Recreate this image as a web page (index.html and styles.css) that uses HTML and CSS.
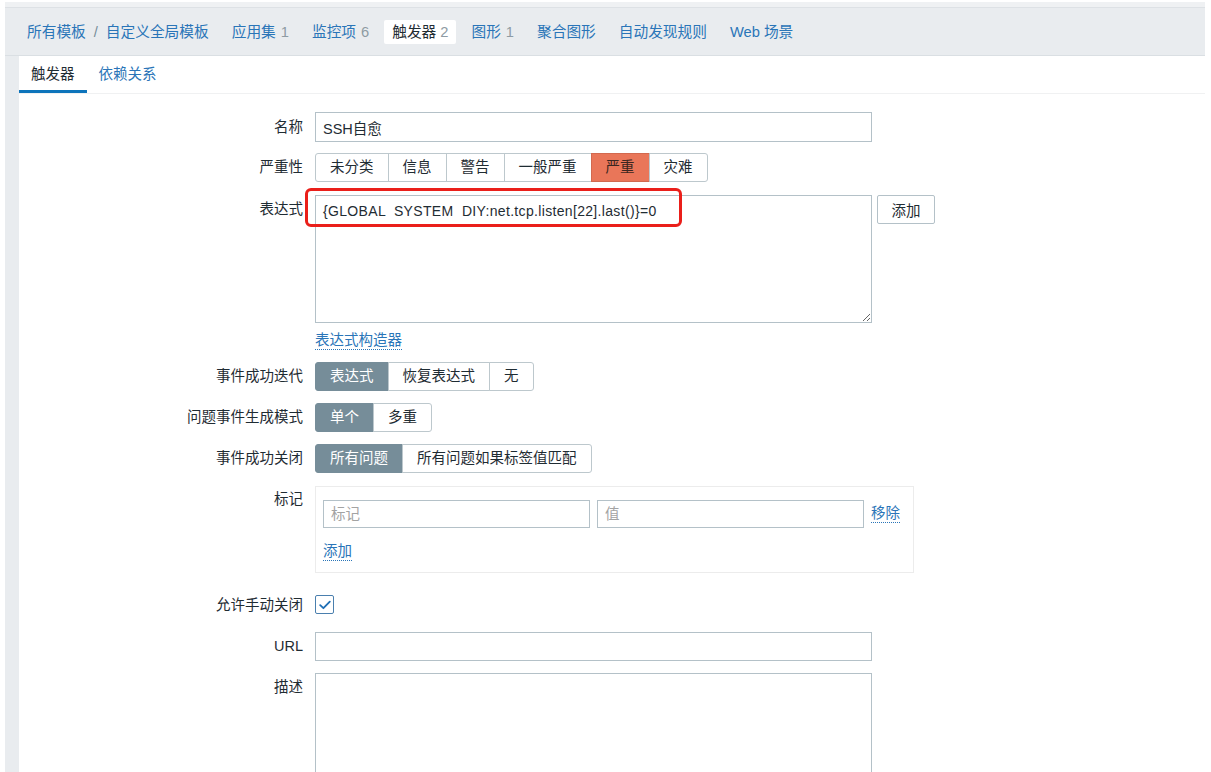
FILE: index.html
```html
<!DOCTYPE html>
<html lang="zh-CN">
<head>
<meta charset="utf-8">
<title>触发器</title>
<link rel="stylesheet" href="styles.css">
</head>
<body>
<div class="wrap">
  <header class="topnav">
    <nav class="crumbs">
      <span class="nav-item"><a class="lnk">所有模板</a><span class="sep">/</span><a class="lnk">自定义全局模板</a></span>
      <span class="nav-item"><a class="lnk">应用集</a><span class="num">1</span></span>
      <span class="nav-item"><a class="lnk">监控项</a><span class="num">6</span></span>
      <span class="nav-item current">触发器<span class="num">2</span></span>
      <span class="nav-item"><a class="lnk">图形</a><span class="num">1</span></span>
      <span class="nav-item"><a class="lnk">聚合图形</a></span>
      <span class="nav-item"><a class="lnk">自动发现规则</a></span>
      <span class="nav-item"><a class="lnk">Web 场景</a></span>
    </nav>
  </header>
  <main class="content">
    <div class="tabs">
      <span class="tab active">触发器</span>
      <a class="tab lnk">依赖关系</a>
    </div>
    <form class="form">
      <div class="row">
        <div class="lbl lbl-tall">名称</div>
        <div class="ctl"><input class="text wide tall" type="text" value="SSH自愈"></div>
      </div>
      <div class="row r-sev">
        <div class="lbl">严重性</div>
        <div class="ctl">
          <div class="seg">
            <span class="seg-btn">未分类</span><span class="seg-btn">信息</span><span class="seg-btn">警告</span><span class="seg-btn">一般严重</span><span class="seg-btn sev-high">严重</span><span class="seg-btn">灾难</span>
          </div>
        </div>
      </div>
      <div class="row r-plus1">
        <div class="lbl">表达式</div>
        <div class="ctl expr-ctl">
          <textarea class="area expr">{GLOBAL  SYSTEM  DIY:net.tcp.listen[22].last()}=0</textarea>
          <button type="button" class="btn">添加</button>
          <span class="mark"></span>
        </div>
      </div>
      <div class="row r-link">
        <div class="lbl"></div>
        <div class="ctl"><a class="lnk dotted">表达式构造器</a></div>
      </div>
      <div class="row">
        <div class="lbl">事件成功迭代</div>
        <div class="ctl">
          <div class="seg"><span class="seg-btn on">表达式</span><span class="seg-btn">恢复表达式</span><span class="seg-btn">无</span></div>
        </div>
      </div>
      <div class="row">
        <div class="lbl">问题事件生成模式</div>
        <div class="ctl">
          <div class="seg"><span class="seg-btn on">单个</span><span class="seg-btn">多重</span></div>
        </div>
      </div>
      <div class="row">
        <div class="lbl">事件成功关闭</div>
        <div class="ctl">
          <div class="seg"><span class="seg-btn on">所有问题</span><span class="seg-btn">所有问题如果标签值匹配</span></div>
        </div>
      </div>
      <div class="row r-tags">
        <div class="lbl lbl-tag">标记</div>
        <div class="ctl">
          <div class="tagbox">
            <div class="tagline">
              <input class="text tag" type="text" placeholder="标记">
              <input class="text tag" type="text" placeholder="值">
              <a class="lnk dotted nowrap">移除</a>
            </div>
            <div class="tagadd"><a class="lnk dotted">添加</a></div>
          </div>
        </div>
      </div>
      <div class="row r-check">
        <div class="lbl lbl-check">允许手动关闭</div>
        <div class="ctl">
          <span class="check">
            <svg width="12" height="10" viewBox="0 0 12 10"><path d="M1.2 5.2 L4.4 8.2 L10.8 1.6" fill="none" stroke="#1f6fb5" stroke-width="1.8" stroke-linecap="round" stroke-linejoin="round"/></svg>
          </span>
        </div>
      </div>
      <div class="row r-url">
        <div class="lbl">URL</div>
        <div class="ctl"><input class="text wide" type="text"></div>
      </div>
      <div class="row">
        <div class="lbl">描述</div>
        <div class="ctl"><textarea class="area desc"></textarea></div>
      </div>
    </form>
  </main>
</div>
</body>
</html>
```
FILE: styles.css
```css
* { box-sizing: border-box; }
html, body { margin: 0; padding: 0; background: #ffffff; overflow: hidden; }
body {
  font-family: "Liberation Sans", "Noto Sans CJK SC", sans-serif;
  font-size: 14.5px;
  color: #1f2c33;
}
.wrap {
  margin: 2px 6px 0 5px;
  background: #e9ecef;
  border-top: 5px solid #eff1f3;
  height: 800px;
}
.topnav {
  border-top: 1px solid #dde1e5;
  height: 49px;
  border-bottom: 1px solid #dadfe3;
  padding-left: 14px;
  padding-top: 1px;
  display: flex;
  align-items: center;
}
.crumbs { display: flex; align-items: center; gap: 7px; font-size: 14.7px; }
.nav-item {
  display: inline-flex;
  align-items: center;
  padding: 0 8px;
  height: 24px;
  line-height: 24px;
  white-space: nowrap;
}
.nav-item.current { background: #ffffff; border-radius: 2px; color: #1f2c33; }
.sep { color: #768d99; margin: 0 8px 0 8px; }
.num { color: #8e9ba3; margin-left: 5px; }
.current .num { margin-left: 4px; }
.lnk { color: #2a75b8; text-decoration: none; cursor: pointer; }
.content {
  margin-left: 14px;
  background: #ffffff;
  height: 100%;
}
.tabs {
  display: flex;
  height: 38px;
  border-bottom: 1px solid #f0f1f2;
}
.tab {
  padding: 0 12px;
  line-height: 36px;
  border-bottom: 3px solid transparent;
  height: 37px;
}
.tab.active { border-bottom-color: #0d74bb; color: #1f2c33; }
.form {
  padding-top: 18px;
  display: flex;
  flex-direction: column;
  gap: 12px;
}
.row { display: flex; gap: 12px; }
.lbl {
  width: 284px;
  flex: none;
  text-align: right;
  line-height: 29px;
  height: 29px;
  color: #1f2c33;
}
.lbl-tall { line-height: 30px; height: 30px; }
.ctl { position: relative; }
.text {
  font: inherit;
  color: #1f2c33;
  height: 29px;
  border: 1px solid #b4c1c8;
  border-radius: 0;
  padding: 0 7px;
  background: #ffffff;
  outline: none;
  display: block;
}
.text.tall { height: 30px; }
.text.wide { width: 557px; }
.text::placeholder { color: #a3a3a3; }
.seg { display: flex; }
.seg-btn {
  height: 29px;
  line-height: 27px;
  padding: 0 14px;
  border: 1px solid #bdc8cd;
  margin-left: -1px;
  background: #ffffff;
  color: #1f2c33;
  white-space: nowrap;
}
.seg-btn:first-child { margin-left: 0; border-radius: 3px 0 0 3px; }
.seg-btn:last-child { border-radius: 0 3px 3px 0; }
.seg-btn.sev-high { background: #e97659; border-color: #d2694f; color: #3b2620; }
.seg-btn.on { background: #768d99; border-color: #768d99; color: #ffffff; }
.r-sev { margin-top: -1px; }
.r-plus1 { margin-top: 1px; }
.expr-ctl { display: flex; gap: 5px; align-items: flex-start; }
.area {
  font: inherit;
  color: #1f2c33;
  border: 1px solid #b4c1c8;
  padding: 6px 7px;
  width: 557px;
  line-height: 18px;
  outline: none;
  white-space: pre-wrap;
  display: block;
}
.area.expr { height: 128px; font-size: 14px; letter-spacing: 0.33px; }
.area.desc { height: 150px; }
.btn {
  font: inherit;
  color: #1f2c33;
  background: #ffffff;
  border: 1px solid #b4c1c8;
  border-radius: 2px;
  height: 29px;
  width: 58px;
  padding: 0;
}
.mark {
  position: absolute;
  left: -10px;
  top: -7px;
  width: 377px;
  height: 39px;
  border: 3px solid #ea1f1a;
  border-radius: 6px;
  pointer-events: none;
}
.r-link { margin-top: -3px; }
.r-link .lbl { line-height: 18px; height: 18px; }
.r-link .ctl { height: 18px; line-height: 17px; }
.dotted { border-bottom: 1px dotted #2a75b8; line-height: 17px; display: inline-block; }
.nowrap { white-space: nowrap; flex: none; }
.r-tags { margin-top: 1px; }
.lbl-tag { line-height: 26px; }
.tagbox {
  width: 599px;
  height: 87px;
  border: 1px solid #ececec;
  padding: 13px 10px 12px 7px;
}
.tagline { display: flex; align-items: center; gap: 7px; height: 28px; }
.text.tag { width: 267px; height: 28px; flex: none; }
.tagadd { margin-top: 15px; height: 19px; line-height: 17px; }
.r-check { margin-top: 10px; }
.lbl-check { line-height: 18px; height: 19px; padding-top: 1px; }
.check {
  display: flex;
  align-items: center;
  justify-content: center;
  width: 19px;
  height: 19px;
  border: 1px solid #4a7fae;
  border-radius: 2px;
  background: #ffffff;
}
.r-url { margin-top: 6px; }
```
